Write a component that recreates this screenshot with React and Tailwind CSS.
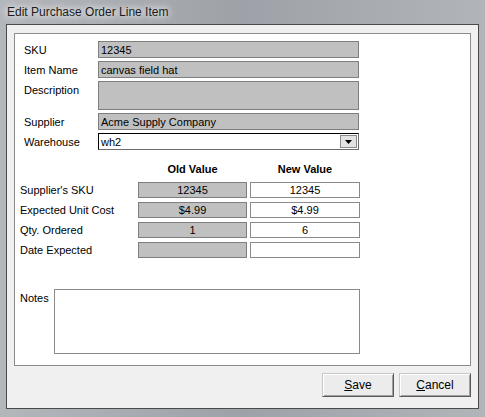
import React from 'react';

const font = { fontFamily: '"Liberation Sans", Arial, sans-serif' };

const topFields = [
  { label: 'SKU', value: '12345', h: 'h-[17px]' },
  { label: 'Item Name', value: 'canvas field hat', h: 'h-[17px]' },
  { label: 'Description', value: '', h: 'h-[29px]' },
  { label: 'Supplier', value: 'Acme Supply Company', h: 'h-[17px]' },
];

const compareRows = [
  { label: "Supplier's SKU", oldValue: '12345', newValue: '12345' },
  { label: 'Expected Unit Cost', oldValue: '$4.99', newValue: '$4.99' },
  { label: 'Qty. Ordered', oldValue: '1', newValue: '6' },
  { label: 'Date Expected', oldValue: '', newValue: '' },
];

function Button({ children }) {
  return (
    <button className="w-[72px] h-[24px] bg-[#ececec] border border-t-[#c8c8c8] border-l-[#c8c8c8] border-r-[#5a5a5a] border-b-[#5a5a5a] shadow-[inset_1px_1px_0_#ffffff,inset_-1px_-1px_0_#a0a0a0] text-[12px] text-black flex items-center justify-center">
      {children}
    </button>
  );
}

export default function App() {
  return (
    <div
      className="w-[485px] h-[417px] flex flex-col bg-gradient-to-r from-[#b3b6bb] via-[#9ea2a8] to-[#b1b5ba] text-[11px] leading-[16px] text-black"
      style={font}
    >
      {/* Title bar */}
      <div className="h-[24px] flex items-center pl-[7px]">
        <span className="text-[12px] text-[#1b1b1b] [text-shadow:0_0_6px_#ffffff,0_0_10px_#ffffff]">
          Edit Purchase Order Line Item
        </span>
      </div>

      {/* Client area */}
      <div className="mx-[6px] mb-[8px] flex-1 border border-[#4a4a4a] bg-[#f0f0f0] pt-[8px] px-[7px] pb-[11px] flex flex-col">
        <div className="h-[333px] bg-white border border-[#8c8c8c] flex flex-col pt-[7px]">
          {/* Top fields */}
          <div className="flex flex-col gap-[3px]">
            {topFields.map((f) => (
              <div key={f.label} className="flex">
                <div className="w-[83px] pl-[9px] h-[17px] flex items-center">{f.label}</div>
                <div
                  className={`w-[261px] ${f.h} bg-[#c0c0c0] border border-[#7f7f7f] px-[2px] flex items-start`}
                >
                  <span className="h-[15px] flex items-center">{f.value}</span>
                </div>
              </div>
            ))}
            <div className="flex">
              <div className="w-[83px] pl-[9px] h-[17px] flex items-center">Warehouse</div>
              <div className="w-[261px] h-[17px] bg-white border border-black border-r-[#6d6d6d] border-b-[#6d6d6d] flex items-center justify-between pl-[2px] pr-[1px]">
                <span>wh2</span>
                <div className="w-[17px] h-[13px] bg-[#e3e3e3] border border-[#8a8a8a] flex items-center justify-center">
                  <svg width="7" height="4" viewBox="0 0 7 4">
                    <path d="M0 0H7L3.5 4Z" fill="#000" />
                  </svg>
                </div>
              </div>
            </div>
          </div>

          {/* Compare header */}
          <div className="flex mt-[11px] h-[16px] items-center font-bold">
            <div className="w-[123px]" />
            <div className="w-[109px] text-center">Old Value</div>
            <div className="w-[3px]" />
            <div className="w-[110px] text-center">New Value</div>
          </div>

          {/* Compare rows */}
          <div className="flex flex-col gap-[4px] mt-[5px]">
            {compareRows.map((r) => (
              <div key={r.label} className="flex items-center h-[16px]">
                <div className="w-[123px] pl-[5px] h-[16px] flex items-center">{r.label}</div>
                <div className="w-[109px] h-[16px] bg-[#c0c0c0] border border-[#7f7f7f] flex items-center justify-center">
                  {r.oldValue}
                </div>
                <div className="w-[3px]" />
                <div className="w-[110px] h-[16px] bg-white border border-[#8a8a8a] flex items-center justify-center">
                  {r.newValue}
                </div>
              </div>
            ))}
          </div>

          {/* Notes */}
          <div className="flex mt-[31px]">
            <div className="w-[39px] pl-[5px] pt-[1px] h-[16px] flex items-center">Notes</div>
            <div className="w-[306px] h-[65px] bg-white border border-[#8a8a8a]" />
          </div>
        </div>

        {/* Buttons */}
        <div className="flex justify-end gap-[5px] mt-[7px]">
          <Button>
            <span className="underline underline-offset-1">S</span>ave
          </Button>
          <Button>
            <span className="underline underline-offset-1">C</span>ancel
          </Button>
        </div>
      </div>
    </div>
  );
}
